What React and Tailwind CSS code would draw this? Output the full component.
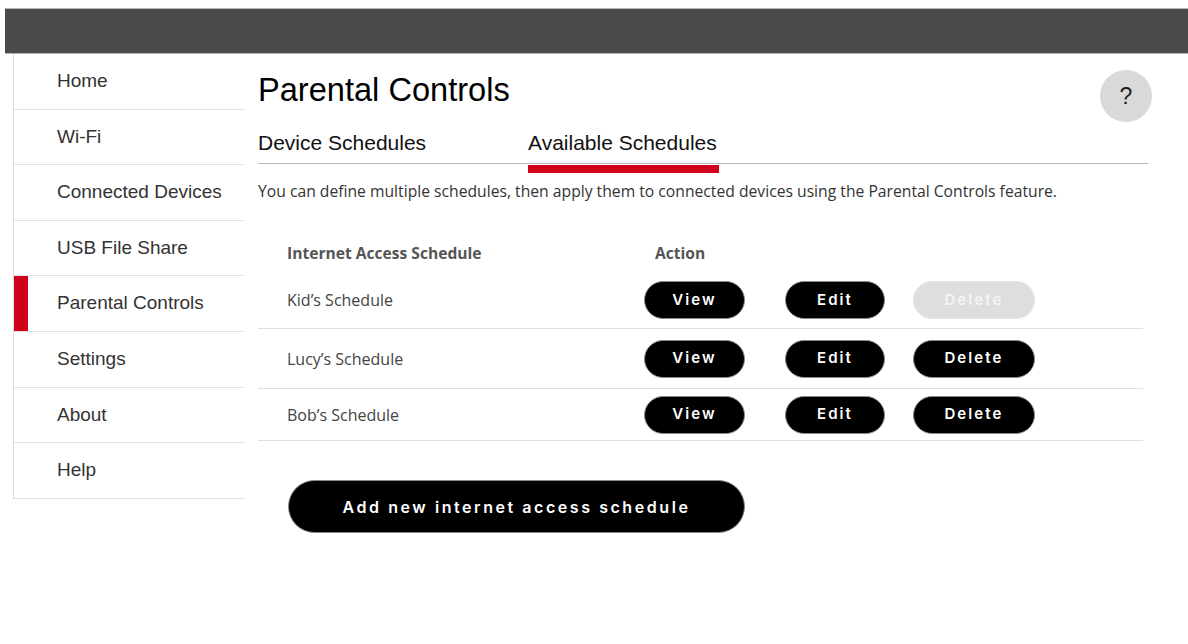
import { useState } from 'react';

const navItems = ['Home', 'Wi-Fi', 'Connected Devices', 'USB File Share', 'Parental Controls', 'Settings', 'About', 'Help'];

const schedules = [
  { name: 'Kid\u2019s Schedule', canDelete: false, rowClass: 'h-[57px]' },
  { name: 'Lucy\u2019s Schedule', canDelete: true, rowClass: 'h-[60px]' },
  { name: 'Bob\u2019s Schedule', canDelete: true, rowClass: 'h-[52px]' },
];

const PillButton = ({ children, className = '', disabled = false }) => (
  <button
    disabled={disabled}
    className={`h-[38px] rounded-full font-['Inter',sans-serif] text-[15px] font-semibold tracking-[0.14em] ${
      disabled
        ? 'bg-[#dedede] text-[#f4f4f4] border border-[#e4e4e4]'
        : 'bg-black text-white border border-[#8a8a8a]'
    } ${className}`}
  >
    {children}
  </button>
);

export default function App() {
  const [active] = useState('Parental Controls');
  const [tab, setTab] = useState('available');

  return (
    <div className="min-h-screen bg-white pt-[8px] font-['Liberation_Sans',Arial,sans-serif]">
      {/* Header bar */}
      <div className="ml-[5px] h-[46px] bg-[#4a4a4a] border-y border-[#b5b5b5]"></div>

      <div className="flex items-start">
        {/* Sidebar */}
        <nav className="ml-[13px] w-[232px] border-l border-[#dcdcdc] flex flex-col">
          {navItems.map((item) => {
            const isActive = item === active;
            return (
              <div
                key={item}
                className="relative h-[55.6px] flex items-center pl-[43px] border-b border-[#e2e2e2] text-[19px] text-[#333]"
              >
                {isActive && <span className="absolute left-0 top-0 bottom-0 w-[14px] bg-[#d0021b]"></span>}
                {item}
              </div>
            );
          })}
        </nav>

        {/* Main content */}
        <main className="ml-[13px] w-[890px]">
          <div className="flex items-start justify-between pt-[16px]">
            <h1 className="mt-[1px] text-[32.6px] leading-[38px] text-black">Parental Controls</h1>
            <button className="w-[52px] h-[52px] -mr-[4px] rounded-full bg-[#d9d9d9] text-[23px] text-[#222] flex items-center justify-center">
              ?
            </button>
          </div>

          {/* Tabs */}
          <div className="mt-[9px] flex border-b-[1.5px] border-[#b8b8b8] pb-[8px] text-[21px] leading-[24px] text-[#111]">
            <button onClick={() => setTab('device')} className="relative w-[270px] text-left">
              Device Schedules
            </button>
            <button onClick={() => setTab('available')} className="relative text-left">
              Available Schedules
              {tab === 'available' && (
                <span className="absolute left-0 -right-[2px] top-full mt-[10px] h-[8px] bg-[#d0021b]"></span>
              )}
            </button>
          </div>

          <p className="mt-[17px] font-['Open_Sans',sans-serif] text-[15.7px] leading-[20px] text-[#333]">
            You can define multiple schedules, then apply them to connected devices using the Parental Controls feature.
          </p>

          {/* Schedule table */}
          <div className="mt-[34px] w-[885px] font-['Open_Sans',sans-serif]">
            <div className="flex items-center h-[37px] text-[15.6px] font-bold text-[#555]">
              <div className="w-[386px] pl-[29px]">Internet Access Schedule</div>
              <div className="pl-[11px]">Action</div>
            </div>
            {schedules.map((s) => (
              <div key={s.name} className={`flex items-center border-b border-[#e0e0e0] ${s.rowClass}`}>
                <div className="w-[386px] pl-[29px] text-[16px] text-[#444]">{s.name}</div>
                <PillButton className="w-[101px]">View</PillButton>
                <PillButton className="w-[100px] ml-[40px]">Edit</PillButton>
                <PillButton className="w-[122px] ml-[28px]" disabled={!s.canDelete}>
                  Delete
                </PillButton>
              </div>
            ))}
          </div>

          <button className="mt-[39px] ml-[30px] w-[457px] h-[53px] rounded-full bg-black text-white border border-[#8a8a8a] font-['Inter',sans-serif] text-[16px] font-semibold tracking-[0.16em]">
            Add new internet access schedule
          </button>
        </main>
      </div>
    </div>
  );
}
